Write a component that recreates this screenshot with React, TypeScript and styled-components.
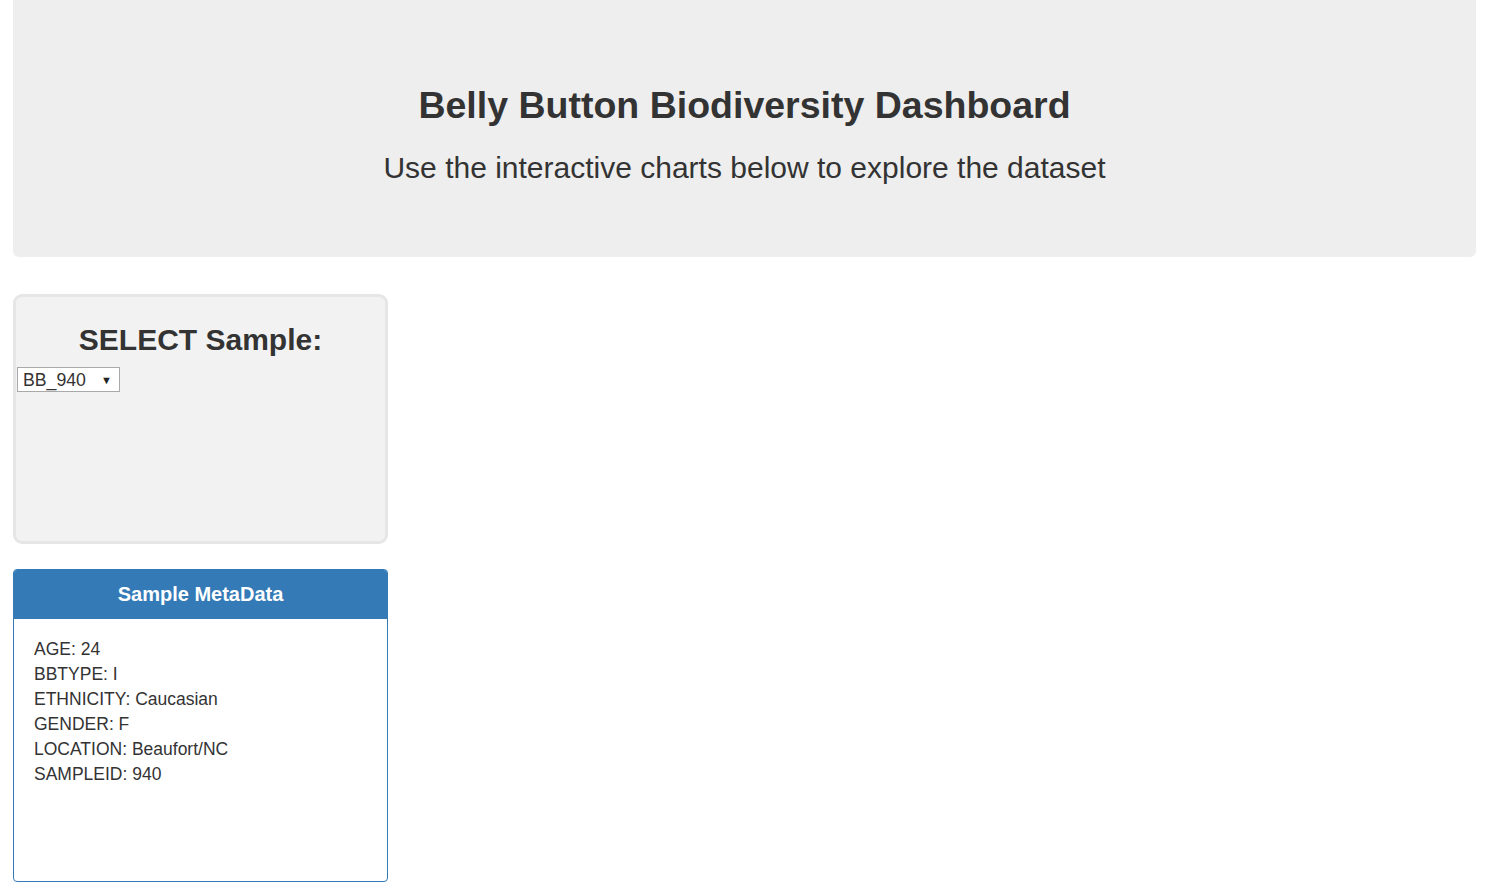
import React from "react";
import styled, { createGlobalStyle } from "styled-components";

const Global = createGlobalStyle`
  html, body { margin: 0; padding: 0; background: #fff; }
  body { font-family: "Liberation Sans", Arial, Helvetica, sans-serif; color: #333; }
  * { box-sizing: border-box; }
`;

const Page = styled.div`
  padding: 0 14px 0 13px;
`;

const Jumbotron = styled.header`
  height: 257px;
  background: #eeeeee;
  border-radius: 0 0 6px 6px;
  display: flex;
  flex-direction: column;
  align-items: center;
  padding-top: 85px;
`;

const Title = styled.h1`
  margin: 0;
  font-size: 37.5px;
  line-height: 41px;
  font-weight: 700;
  color: #333;
`;

const Subtitle = styled.p`
  margin: 21px 0 0;
  font-size: 30px;
  line-height: 42px;
  color: #333;
`;

const Column = styled.div`
  width: 375px;
  margin-top: 37px;
  display: flex;
  flex-direction: column;
  gap: 25px;
`;

const Well = styled.section`
  height: 250px;
  background: #f2f2f2;
  border: 3px solid #e6e6e6;
  border-radius: 9px;
  padding: 25px 1px 0;
`;

const WellTitle = styled.h3`
  margin: 0 0 10px;
  text-align: center;
  font-size: 30px;
  line-height: 36px;
  font-weight: 700;
  color: #333;
`;

const Select = styled.div`
  width: 103px;
  height: 25px;
  margin-top: -1px;
  background: #fff;
  border: 1px solid #a9a9a9;
  display: flex;
  align-items: center;
  justify-content: space-between;
  padding: 1px 7px 0 5px;
  font-size: 17.7px;
  color: #333;
`;

const Arrow = styled.span`
  font-size: 11px;
  color: #222;
`;

const Panel = styled.section`
  height: 313px;
  border: 1px solid #337ab7;
  border-radius: 4px;
  overflow: hidden;
  background: #fff;
`;

const PanelHeading = styled.div`
  height: 49px;
  background: #337ab7;
  color: #fff;
  display: flex;
  align-items: center;
  justify-content: center;
  font-size: 20px;
  font-weight: 700;
`;

const PanelBody = styled.div`
  padding: 18px 20px;
`;

const Line = styled.div`
  font-size: 17.5px;
  line-height: 25px;
  color: #333;
`;

const meta: [string, string][] = [
  ["AGE", "24"],
  ["BBTYPE", "I"],
  ["ETHNICITY", "Caucasian"],
  ["GENDER", "F"],
  ["LOCATION", "Beaufort/NC"],
  ["SAMPLEID", "940"],
];

export default function App() {
  return (
    <Page>
      <Global />
      <Jumbotron>
        <Title>Belly Button Biodiversity Dashboard</Title>
        <Subtitle>Use the interactive charts below to explore the dataset</Subtitle>
      </Jumbotron>
      <Column>
        <Well>
          <WellTitle>SELECT Sample:</WellTitle>
          <Select>
            <span>BB_940</span>
            <Arrow>▼</Arrow>
          </Select>
        </Well>
        <Panel>
          <PanelHeading>Sample MetaData</PanelHeading>
          <PanelBody>
            {meta.map(([k, v]) => (
              <Line key={k}>
                {k}: {v}
              </Line>
            ))}
          </PanelBody>
        </Panel>
      </Column>
    </Page>
  );
}
